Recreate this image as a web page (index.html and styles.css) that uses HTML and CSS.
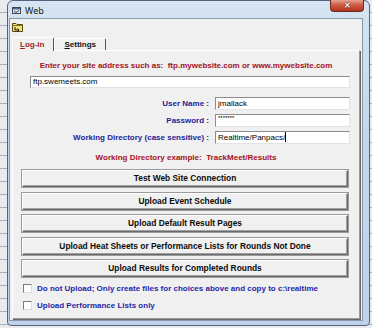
FILE: index.html
```html
<!DOCTYPE html>
<html lang="en">
<head>
  <meta charset="UTF-8" />
  <title>Web</title>
  <link rel="stylesheet" href="styles.css">
</head>
<body>
  <div class="desk">
    <div class="window">

      <!-- Title bar -->
      <div class="titlebar">
        <svg class="app-icon" width="9" height="7" viewBox="0 0 9 7">
          <rect x="0.5" y="0.5" width="8" height="6" fill="#dfe6ee" stroke="#3b4656"/>
          <rect x="1" y="1" width="7" height="1.5" fill="#4a6a96"/>
          <path d="M2 4 L4 5.5 L7 3.5" stroke="#3b4656" fill="none"/>
        </svg>
        <span class="title">Web</span>
        <div class="close">&#x2715;</div>
      </div>

      <div class="client">
        <div class="toolbar">
          <svg width="11" height="10" viewBox="0 0 11 10">
            <path d="M0.5 1.5 H4 L5 2.5 H10.5 V9.5 H0.5 Z" fill="#f2e27a" stroke="#5a4a10"/>
            <path d="M0.5 3.5 H10.5" stroke="#8a7420"/>
            <path d="M3 5 V8 H7 M5.5 6.5 L7 8 L5.5 9.5" stroke="#1a1a1a" fill="none"/>
          </svg>
        </div>

        <!-- Tabs -->
        <div class="tabs">
          <span class="tab active"><u>L</u>og-in</span>
          <span class="tab"><u>S</u>ettings</span>
        </div>

        <div class="page">
          <p class="hint">Enter your site address such as:&nbsp; ftp.mywebsite.com or www.mywebsite.com</p>
          <div class="field wide">ftp.swemeets.com</div>

          <div class="form">
            <span class="label">User Name :</span>
            <div class="field">jmallack</div>
            <span class="label">Password :</span>
            <div class="field secret">*******</div>
            <span class="label">Working Directory (case sensitive) :</span>
            <div class="field">Realtime/Panpacs/<span class="caret"></span></div>
          </div>

          <p class="hint example">Working Directory example:&nbsp; TrackMeet/Results</p>

          <div class="buttons">
            <div class="btn">Test Web Site Connection</div>
            <div class="btn">Upload Event Schedule</div>
            <div class="btn">Upload Default Result Pages</div>
            <div class="btn">Upload Heat Sheets or Performance Lists for Rounds Not Done</div>
            <div class="btn">Upload Results for Completed Rounds</div>
          </div>

          <div class="check"><span class="box"></span>Do not Upload; Only create files for choices above and copy to c:\realtime</div>
          <div class="check"><span class="box"></span>Upload Performance Lists only</div>
        </div>
      </div>

    </div>
  </div>
</body>
</html>
```

FILE: styles.css
```css
* {
  box-sizing: border-box;
}

body {
  margin: 0;
  width: 372px;
  height: 328px;
  overflow: hidden;
  font-family: "Liberation Sans", Arial, sans-serif;
  background-color: #e9ebef;
  background-image:
    repeating-linear-gradient(to bottom, transparent 0 12px, #aab0ba 12px 13px);
}

.desk {
  padding-left: 7px;
}

.window {
  width: 363px;
  height: 326px;
  border: 1px solid #55647a;
  border-radius: 6px 6px 4px 4px;
  background: linear-gradient(to bottom, #d6e4f3 0%, #c4d7ec 40%, #bdd2ea 100%);
  padding: 0 6px 4px 1px;
  position: relative;
}

.titlebar {
  height: 17px;
  display: flex;
  align-items: center;
  padding-left: 3px;
  gap: 4px;
}

.app-icon {
  margin-top: 1px;
}

.title {
  font-family: "Noto Sans", "DejaVu Sans", sans-serif;
  font-size: 9px;
  color: #1a1a1a;
  margin-top: 1px;
}

.close {
  position: absolute;
  top: -1px;
  right: 5px;
  width: 34px;
  height: 12px;
  border: 1px solid #6a2a20;
  border-top: none;
  border-radius: 0 0 4px 4px;
  background: linear-gradient(to bottom, #e3a393 0%, #cf5c45 45%, #b5321d 100%);
  color: #fff;
  font-size: 8px;
  font-weight: bold;
  text-align: center;
  line-height: 11px;
  text-shadow: 0 0 1px #4a1008, 0 0 1px #4a1008;
}

.client {
  height: 303px;
  background: #f0f0f0;
  border: 1px solid #8a98aa;
  padding: 3px 1px 0 2px;
}

.toolbar {
  height: 14px;
}

.toolbar svg {
  display: block;
}

.tabs {
  display: flex;
  height: 14px;
  align-items: flex-end;
  padding-left: 0;
}

.tab {
  font-size: 8px;
  font-weight: bold;
  color: #111;
  height: 12px;
  line-height: 11px;
  padding: 0 9px;
  border-top: 1px solid #fff;
  border-left: 1px solid #fff;
  border-right: 1px solid #555;
  border-radius: 2px 2px 0 0;
}

.tab.active {
  height: 14px;
  line-height: 14px;
  color: #9a1f2c;
  padding: 0 9px 0 7px;
  position: relative;
  z-index: 1;
  background: #f0f0f0;
  margin-bottom: -1px;
}

.tab u {
  text-decoration-thickness: 1px;
}

.page {
  height: 269px;
  border-top: 1px solid #fff;
  border-left: 1px solid #fff;
  border-right: 1px solid #9a9a9a;
  border-bottom: 1px solid #9a9a9a;
  box-shadow: 1px 1px 0 #696969;
  margin-right: 1px;
}

.hint {
  margin: 10px 0 0;
  height: 10px;
  line-height: 10px;
  font-size: 8px;
  font-weight: bold;
  color: #a3121f;
  text-align: center;
}

.field {
  height: 13px;
  background: #fff;
  border-top: 1px solid #8c8c8c;
  border-left: 1px solid #8c8c8c;
  border-right: 1px solid #e3e3e3;
  border-bottom: 1px solid #e3e3e3;
  font-size: 8px;
  line-height: 11px;
  padding-left: 2px;
  color: #000;
  white-space: nowrap;
}

.field.wide {
  margin: 5px 0 0 17px;
  width: 320px;
  height: 12px;
  line-height: 10px;
}

.field.secret {
  font-size: 6px;
  line-height: 7px;
}

.caret {
  display: inline-block;
  width: 1px;
  height: 10px;
  background: #000;
  vertical-align: -2px;
}

.form {
  display: grid;
  grid-template-columns: 196px 135px;
  column-gap: 6px;
  row-gap: 4px;
  margin-top: 9px;
  align-items: center;
}

.label {
  font-size: 8px;
  font-weight: bold;
  color: #23239a;
  text-align: right;
}

.hint.example {
  margin-top: 9px;
}

.buttons {
  display: flex;
  flex-direction: column;
  gap: 5.5px;
  margin: 7px 0 0 9px;
  width: 326px;
}

.btn {
  height: 17px;
  background: #f0f0f0;
  border-top: 1px solid #fff;
  border-left: 1px solid #fff;
  border-right: 1px solid #6a6a6a;
  border-bottom: 1px solid #6a6a6a;
  box-shadow: inset -1px -1px 0 #a0a0a0, 0 0 0 1px #9a9a9a;
  font-size: 8.4px;
  font-weight: bold;
  color: #0c0c0c;
  text-align: center;
  line-height: 15px;
}

.check {
  display: flex;
  align-items: center;
  gap: 5px;
  margin: 6px 0 0 10px;
  height: 10px;
  font-size: 8px;
  font-weight: bold;
  color: #2626a8;
}

.check + .check {
  margin-top: 7.5px;
}

.box {
  width: 9px;
  height: 9px;
  background: #fff;
  border-top: 1px solid #7a7a7a;
  border-left: 1px solid #7a7a7a;
  border-right: 1px solid #dcdcdc;
  border-bottom: 1px solid #dcdcdc;
}
```
